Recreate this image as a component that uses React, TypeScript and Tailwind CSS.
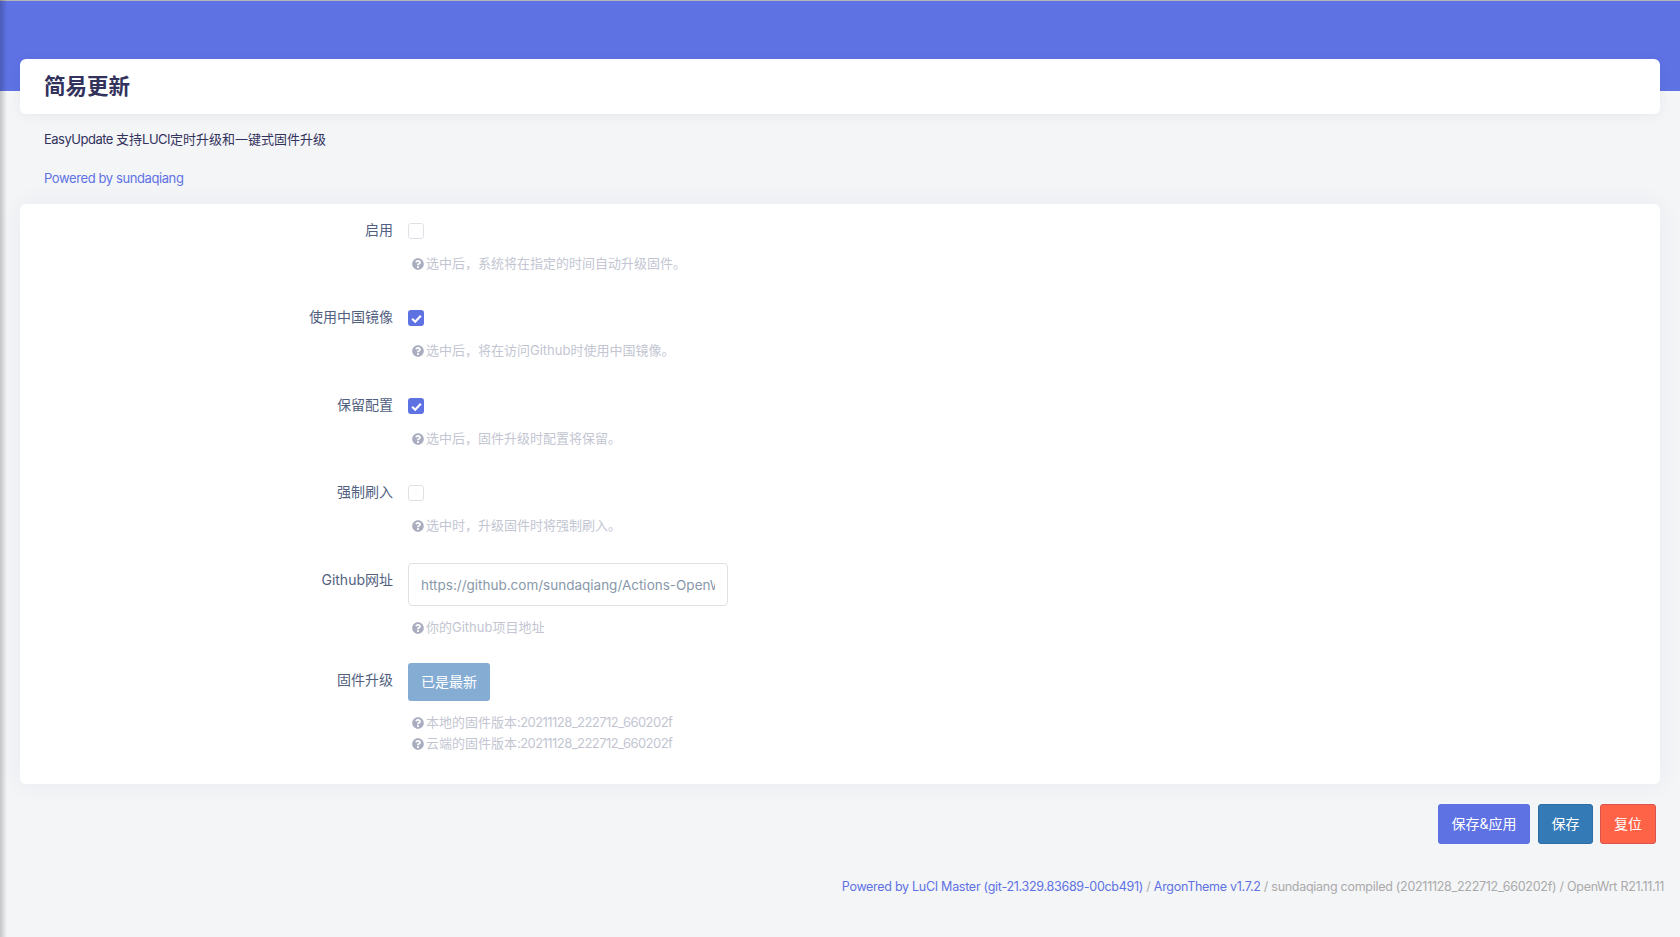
import type { ReactNode } from "react"
import { FaQuestionCircle } from "react-icons/fa"

const fontStack = "font-['Inter','Noto_Sans_CJK_SC',sans-serif]"

function Help({ children }: { children: ReactNode }) {
  return (
    <div className="flex items-center h-[21px] pl-[4px] text-[13px] text-[#c3c6d2]">
      <FaQuestionCircle className="size-[12px] mr-[2px] text-[#a9adbf] shrink-0" />
      <span>{children}</span>
    </div>
  )
}

function Checkbox({ checked }: { checked?: boolean }) {
  if (checked) {
    return (
      <span className="flex items-center justify-center size-4 rounded-[3px] bg-[#5e72e4]">
        <svg viewBox="0 0 12 12" className="size-[13px]">
          <path d="M2 6.3 4.8 9 10 3.4" fill="none" stroke="white" strokeWidth="2" />
        </svg>
      </span>
    )
  }
  return <span className="block size-4 rounded-[3px] border border-[#dee2e6] bg-white" />
}

function Row({ label, control, help, labelClass, pb }: { label: string; control: ReactNode; help: ReactNode; labelClass: string; pb: string }) {
  return (
    <div className={`flex ${pb}`}>
      <div className={`w-[373px] shrink-0 text-right text-[14px] leading-5 text-[#525f7f] ${labelClass}`}>{label}</div>
      <div className="ml-[15px]">
        {control}
        {help}
      </div>
    </div>
  )
}

export default function App() {
  return (
    <div className={`relative min-h-[937px] bg-[#f4f5f7] ${fontStack} overflow-hidden`}>
      <div className="absolute left-0 top-0 bottom-0 w-[7px] z-10 bg-gradient-to-r from-[#00000033] to-transparent" />
      <div className="h-[91px] bg-[#5e72e4] border-t border-[#b5b5b5]" />

      <div className="mx-5 -mt-[32px]">
        <div className="h-[55px] rounded-[6px] bg-white pl-6 flex items-center shadow-[0_2px_12px_rgba(50,50,93,0.06)]">
          <h2 className="text-[21.5px] font-bold text-[#32325d]">简易更新</h2>
        </div>

        <p className="pl-6 mt-[15px] text-[13px] leading-5 text-[#32325d]">
          <span className="tracking-[-0.5px]">EasyUpdate </span>支持<span className="tracking-[-0.5px]">LUCI</span>定时升级和一键式固件升级
        </p>
        <p className="pl-6 mt-[19px] text-[13px] leading-5 tracking-[-0.4px] text-[#5e72e4]">Powered by sundaqiang</p>

        <div className="mt-[16px] rounded-[6px] bg-white pt-[19px] pb-[30px] shadow-[0_0_24px_rgba(50,50,93,0.06)]">
          <Row
            label="启用"
            labelClass="-mt-[3px]"
            pb="pb-[36px]"
            control={<Checkbox />}
            help={<div className="mt-[14px]"><Help>选中后，系统将在指定的时间自动升级固件。</Help></div>}
          />
          <Row
            label="使用中国镜像"
            labelClass="-mt-[3px]"
            pb="pb-[37px]"
            control={<Checkbox checked />}
            help={<div className="mt-[14px]"><Help>选中后，将在访问Github时使用中国镜像。</Help></div>}
          />
          <Row
            label="保留配置"
            labelClass="-mt-[3px]"
            pb="pb-[36px]"
            control={<Checkbox checked />}
            help={<div className="mt-[14px]"><Help>选中后，固件升级时配置将保留。</Help></div>}
          />
          <Row
            label="强制刷入"
            labelClass="-mt-[3px]"
            pb="pb-[27px]"
            control={<Checkbox />}
            help={<div className="mt-[14px]"><Help>选中时，升级固件时将强制刷入。</Help></div>}
          />
          <Row
            label="Github网址"
            labelClass="mt-[7px]"
            pb="pb-[25px]"
            control={
              <input
                readOnly
                value="https://github.com/sundaqiang/Actions-OpenWrt"
                className="block w-[320px] h-[43px] rounded-[4px] border border-[#dee2e6] bg-white px-3 text-[13.5px] text-[#8898aa] outline-none"
              />
            }
            help={<div className="mt-[11px]"><Help>你的Github项目地址</Help></div>}
          />
          <Row
            label="固件升级"
            labelClass="mt-[7px]"
            pb=""
            control={
              <button className="block w-[82px] h-[38px] pb-[2px] rounded-[3px] bg-[#85add4] text-[14px] text-white">已是最新</button>
            }
            help={
              <div className="mt-[11px]">
                <Help>本地的固件版本<span className="tracking-[-0.55px]">:20211128_222712_660202f</span></Help>
                <Help>云端的固件版本<span className="tracking-[-0.55px]">:20211128_222712_660202f</span></Help>
              </div>
            }
          />
        </div>

        <div className="flex justify-end gap-[7px] mt-[20px] pr-1">
          <button className="h-10 w-[92px] mr-[1px] pb-[2px] rounded-[3px] bg-[#5e72e4] text-[14px] text-white">保存&amp;应用</button>
          <button className="h-10 w-[55px] pb-[2px] rounded-[3px] border border-[#2e6da4] bg-[#337ab7] text-[14px] text-white">保存</button>
          <button className="h-10 w-[56px] pb-[2px] rounded-[3px] border border-[#d9534f] bg-[#ff6347] text-[14px] text-white">复位</button>
        </div>
      </div>

      <div className="mt-[33px] pr-4 text-right text-[12.5px] leading-5 tracking-[-0.28px] text-[#aaa]">
        <a className="text-[#5e72e4]">Powered by LuCI Master (git-21.329.83689-00cb491)</a>
        {" / "}
        <a className="text-[#5e72e4]">ArgonTheme v1.7.2</a>
        {" / sundaqiang compiled (20211128_222712_660202f) / OpenWrt R21.11.11"}
      </div>
    </div>
  )
}
